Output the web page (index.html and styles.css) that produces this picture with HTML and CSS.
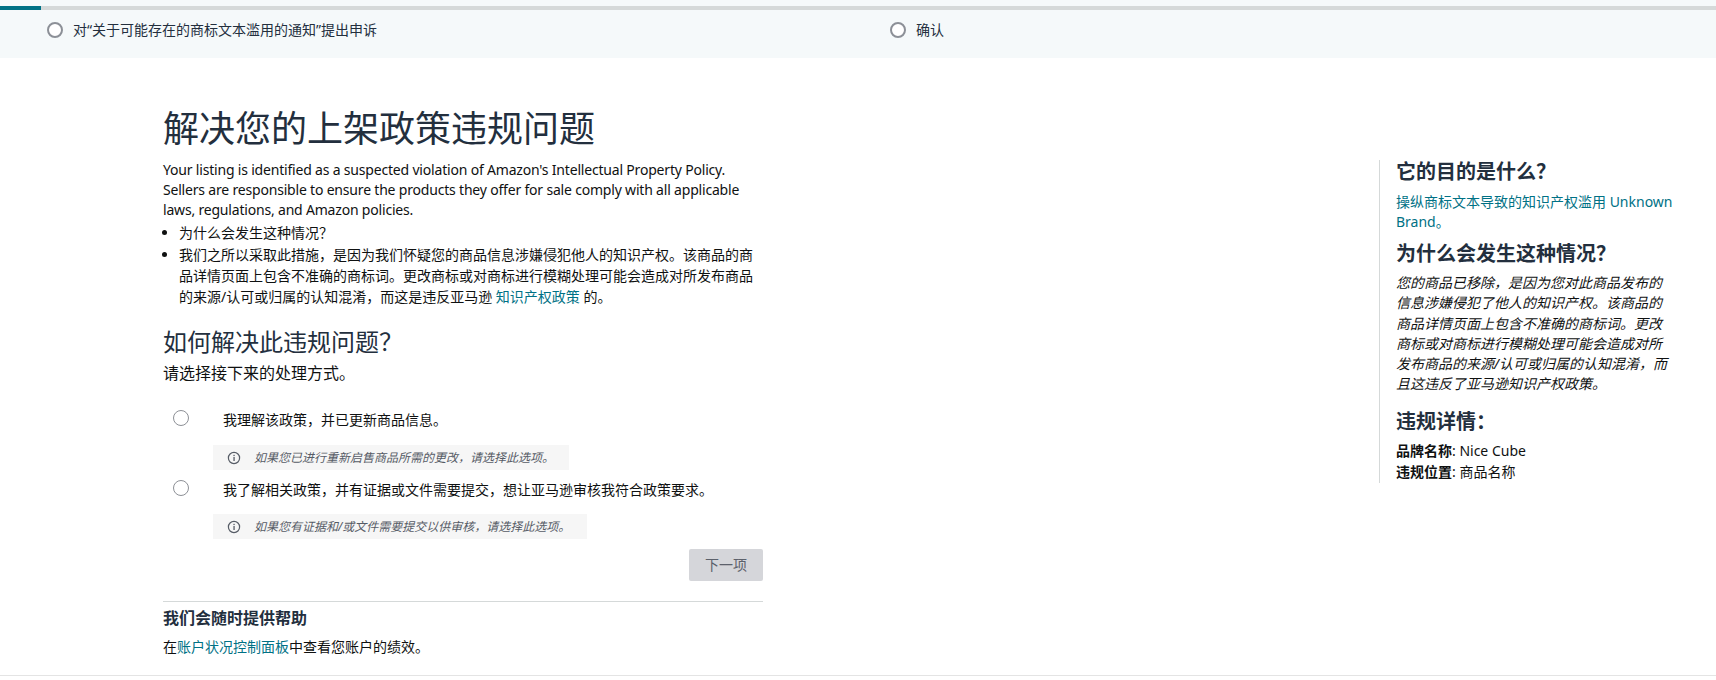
FILE: index.html
```html
<!DOCTYPE html>
<html lang="zh-CN">
<head>
<meta charset="utf-8">
<title>解决您的上架政策违规问题</title>
<link rel="stylesheet" href="styles.css">
</head>
<body>
<header class="stepper">
  <div class="progress"><div class="progress-fill"></div></div>
  <div class="steps">
    <div class="step step-first"><span class="step-dot"></span><span>对“关于可能存在的商标文本滥用的通知”提出申诉</span></div>
    <div class="step"><span class="step-dot"></span><span>确认</span></div>
  </div>
</header>
<main class="page">
  <section class="content">
    <h1 class="title">解决您的上架政策违规问题</h1>
    <p class="intro">Your listing is identified as a suspected violation of Amazon's Intellectual Property Policy. Sellers are responsible to ensure the products they offer for sale comply with all applicable laws, regulations, and Amazon policies.</p>
    <ul class="reasons">
      <li>为什么会发生这种情况？</li>
      <li>我们之所以采取此措施，是因为我们怀疑您的商品信息涉嫌侵犯他人的知识产权。该商品的商品详情页面上包含不准确的商标词。更改商标或对商标进行模糊处理可能会造成对所发布商品的来源/认可或归属的认知混淆，而这是违反亚马逊 <a href="#">知识产权政策</a> 的。</li>
    </ul>
    <h2 class="subtitle">如何解决此违规问题？</h2>
    <p class="prompt">请选择接下来的处理方式。</p>
    <div class="option option-first">
      <span class="radio"></span>
      <span class="option-label">我理解该政策，并已更新商品信息。</span>
    </div>
    <div class="hint hint-one">
      <svg class="info" viewBox="0 0 14 14" width="14" height="14"><circle cx="7" cy="7" r="5.6" fill="none" stroke="#565c66" stroke-width="1.2"/><rect x="6.4" y="6" width="1.3" height="4" fill="#565c66"/><rect x="6.4" y="3.8" width="1.3" height="1.3" fill="#565c66"/></svg>
      <em>如果您已进行重新启售商品所需的更改，请选择此选项。</em>
    </div>
    <div class="option option-second">
      <span class="radio"></span>
      <span class="option-label">我了解相关政策，并有证据或文件需要提交，想让亚马逊审核我符合政策要求。</span>
    </div>
    <div class="hint hint-two">
      <svg class="info" viewBox="0 0 14 14" width="14" height="14"><circle cx="7" cy="7" r="5.6" fill="none" stroke="#565c66" stroke-width="1.2"/><rect x="6.4" y="6" width="1.3" height="4" fill="#565c66"/><rect x="6.4" y="3.8" width="1.3" height="1.3" fill="#565c66"/></svg>
      <em>如果您有证据和/或文件需要提交以供审核，请选择此选项。</em>
    </div>
    <div class="actions"><button class="next" type="button" disabled>下一项</button></div>
    <div class="help">
      <h3 class="help-title">我们会随时提供帮助</h3>
      <p class="help-text">在<a href="#">账户状况控制面板</a>中查看您账户的绩效。</p>
    </div>
  </section>
  <aside class="side">
    <h3 class="side-title">它的目的是什么？</h3>
    <p class="side-link"><a href="#">操纵商标文本导致的知识产权滥用 Unknown Brand。</a></p>
    <h3 class="side-title side-why">为什么会发生这种情况？</h3>
    <p class="side-why-text">您的商品已移除，是因为您对此商品发布的信息涉嫌侵犯了他人的知识产权。该商品的商品详情页面上包含不准确的商标词。更改商标或对商标进行模糊处理可能会造成对所发布商品的来源/认可或归属的认知混淆，而且这违反了亚马逊知识产权政策。</p>
    <h3 class="side-title side-details">违规详情：</h3>
    <p class="side-row side-row-first"><strong>品牌名称</strong>: Nice Cube</p>
    <p class="side-row"><strong>违规位置</strong>: 商品名称</p>
  </aside>
</main>
<footer class="foot"></footer>
</body>
</html>
```
FILE: styles.css
```css
* { box-sizing: border-box; }
html, body { margin: 0; padding: 0; }
body {
  font-family: "Noto Sans", "Noto Sans CJK SC", sans-serif;
  font-size: 14px;
  line-height: 20px;
  color: #0f1111;
  background: #fff;
  height: 680px;
  overflow: hidden;
}
a { color: #007185; text-decoration: none; }
p, h1, h2, h3, ul { margin: 0; padding: 0; }

.stepper { background: #f5f9fa; height: 58px; padding-top: 6px; }
.progress { height: 4px; background: #d5d9d9; }
.progress-fill { width: 41px; height: 4px; background: #007185; }
.steps { display: flex; padding: 10px 0 0 47px; color: #232f3e; }
.step { display: flex; align-items: center; gap: 10px; }
.step-first { width: 843px; }
.step-dot { width: 16px; height: 16px; border: 2px solid #8c9097; border-radius: 50%; background: #fff; }

.page { display: flex; justify-content: space-between; height: 617px; padding: 0 0 0 163px; }
.content { width: 600px; padding-top: 49px; }
.title { font-size: 36px; line-height: 44px; font-weight: 400; color: #232f3e; margin-bottom: 9px; }
.intro { letter-spacing: -0.19px; }
.reasons { padding-left: 16px; margin-top: 2px; list-style: disc; }
.reasons li { margin-bottom: 1px; line-height: 21px; }
.subtitle { font-size: 24px; line-height: 32px; font-weight: 400; color: #232f3e; margin-top: 19px; }
.prompt { margin-top: 5px; font-size: 16px; }

.option { display: flex; align-items: flex-start; }
.option-first { margin-top: 19px; }
.option-second { margin-top: 2px; }
.radio { width: 16px; height: 16px; margin: 8px 0 0 10px; border: 1px solid #8d9096; border-radius: 50%; flex: none; background: #fff; }
.option-label { margin: 8px 0 0 34px; }
.hint { display: flex; align-items: center; height: 25px; margin-left: 50px; padding-left: 14px; background: #f6f6f6; font-size: 12px; color: #565c66; }
.hint-one { width: 356px; margin-top: 15px; }
.hint-two { width: 374px; margin-top: 14px; }
.info { margin-right: 13px; flex: none; }
.actions { display: flex; justify-content: flex-end; margin-top: 10px; }
.next { width: 74px; height: 32px; border: 0; border-radius: 2px; background: #d5d6da; color: #5c616b; font: inherit; }
.help { margin-top: 20px; border-top: 1px solid #d5d9d9; padding-top: 4px; }
.help-title { font-size: 16px; line-height: 24px; font-weight: 700; color: #232f3e; }
.help-text { margin-top: 7px; }

.side { width: 337px; margin-top: 102px; height: 323px; border-left: 1px solid #d5d9d9; padding-left: 16px; }
.side-title { font-size: 20px; line-height: 24px; font-weight: 700; color: #232f3e; }
.side-link { margin-top: 8px; width: 290px; }
.side-why { margin-top: 10px; }
.side-why-text { margin-top: 7px; width: 275px; font-style: italic; line-height: 20.3px; }
.side-details { margin-top: 15px; }
.side-row { line-height: 21px; }
.side-row-first { margin-top: 6px; }
.foot { border-top: 1px solid #e4e4e4; }
```
